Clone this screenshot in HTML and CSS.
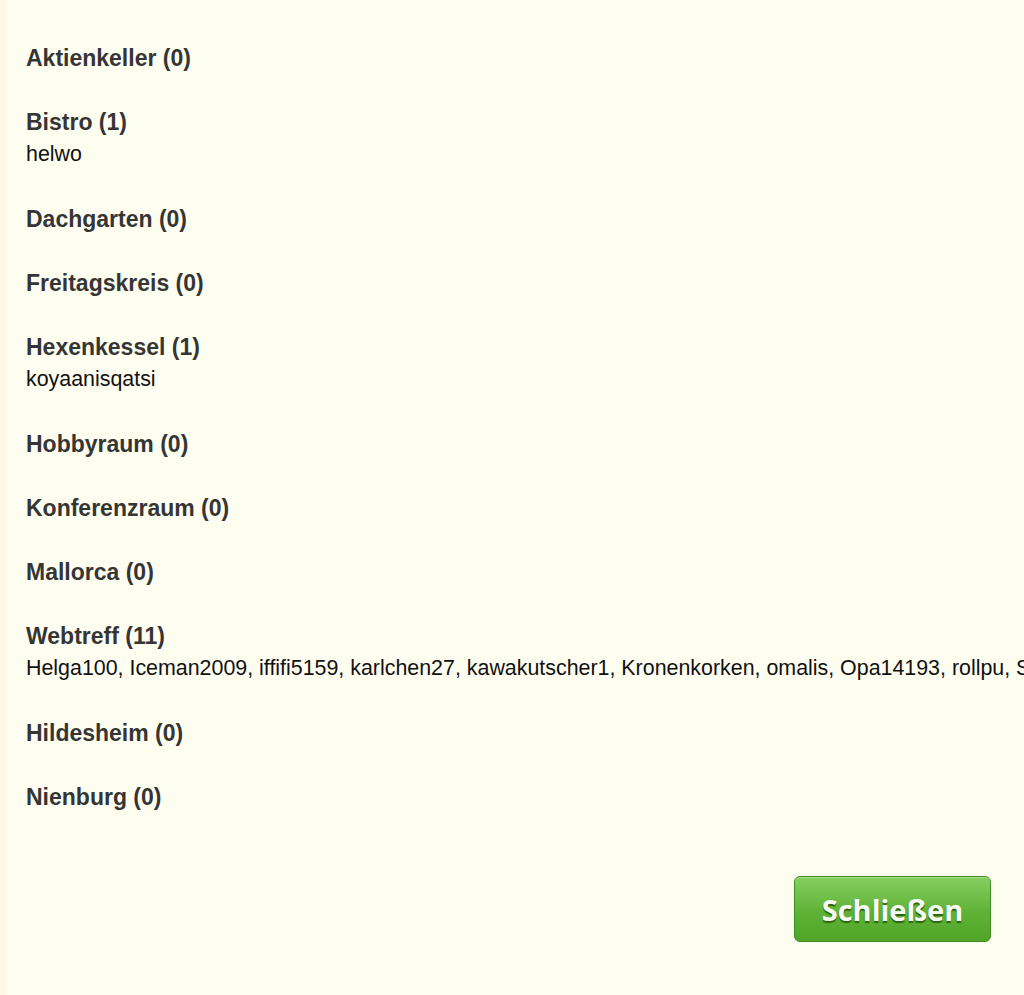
FILE: index.html
```html
<!DOCTYPE html>
<html>
<head>
<meta charset="utf-8">
<link rel="stylesheet" href="styles.css">
</head>
<body>
<div class="page">
  <div class="rooms">
    <div class="room"><div class="name">Aktienkeller (0)</div></div>
    <div class="room"><div class="name">Bistro (1)</div><div class="users">helwo</div></div>
    <div class="room"><div class="name">Dachgarten (0)</div></div>
    <div class="room"><div class="name">Freitagskreis (0)</div></div>
    <div class="room"><div class="name">Hexenkessel (1)</div><div class="users">koyaanisqatsi</div></div>
    <div class="room"><div class="name">Hobbyraum (0)</div></div>
    <div class="room"><div class="name">Konferenzraum (0)</div></div>
    <div class="room"><div class="name">Mallorca (0)</div></div>
    <div class="room"><div class="name">Webtreff (11)</div><div class="users">Helga100, Iceman2009, iffifi5159, karlchen27, kawakutscher1, Kronenkorken, omalis, Opa14193, rollpu, Sonnenschein, Ulli</div></div>
    <div class="room"><div class="name">Hildesheim (0)</div></div>
    <div class="room"><div class="name">Nienburg (0)</div></div>
  </div>
  <div class="actions">
    <button class="close-btn">Schließen</button>
  </div>
</div>
</body>
</html>
```
FILE: styles.css
```css
html, body {
  margin: 0;
  padding: 0;
  background: #fefef0;
  height: 100%;
  overflow: hidden;
}
body {
  border-left: 7px solid #fff7e4;
  box-sizing: border-box;
}
.page {
  padding: 42px 0 0 19px;
  font-family: "Liberation Sans", Arial, sans-serif;
}
.rooms {
  display: flex;
  flex-direction: column;
  gap: 32px;
}
.name {
  font-size: 23px;
  font-weight: bold;
  color: #353535;
  line-height: 32px;
  white-space: nowrap;
}
.users {
  font-size: 21.4px;
  color: #111;
  line-height: 33px;
  white-space: nowrap;
  overflow: hidden;
}
.actions {
  display: flex;
  justify-content: flex-end;
  margin-top: 63px;
  padding-right: 33px;
}
.close-btn {
  width: 197px;
  height: 66px;
  border: 1px solid #3f8a22;
  border-radius: 6px;
  background: linear-gradient(#86cf62, #5fb236 55%, #50a526);
  box-shadow: inset 0 1px 0 rgba(255,255,255,0.35);
  color: #f8faf2;
  font-family: "Open Sans", "DejaVu Sans", sans-serif;
  font-weight: 700;
  font-size: 29px;
  text-shadow: 0 2px 1px #2a6410;
  padding: 0;
  cursor: pointer;
}
```
